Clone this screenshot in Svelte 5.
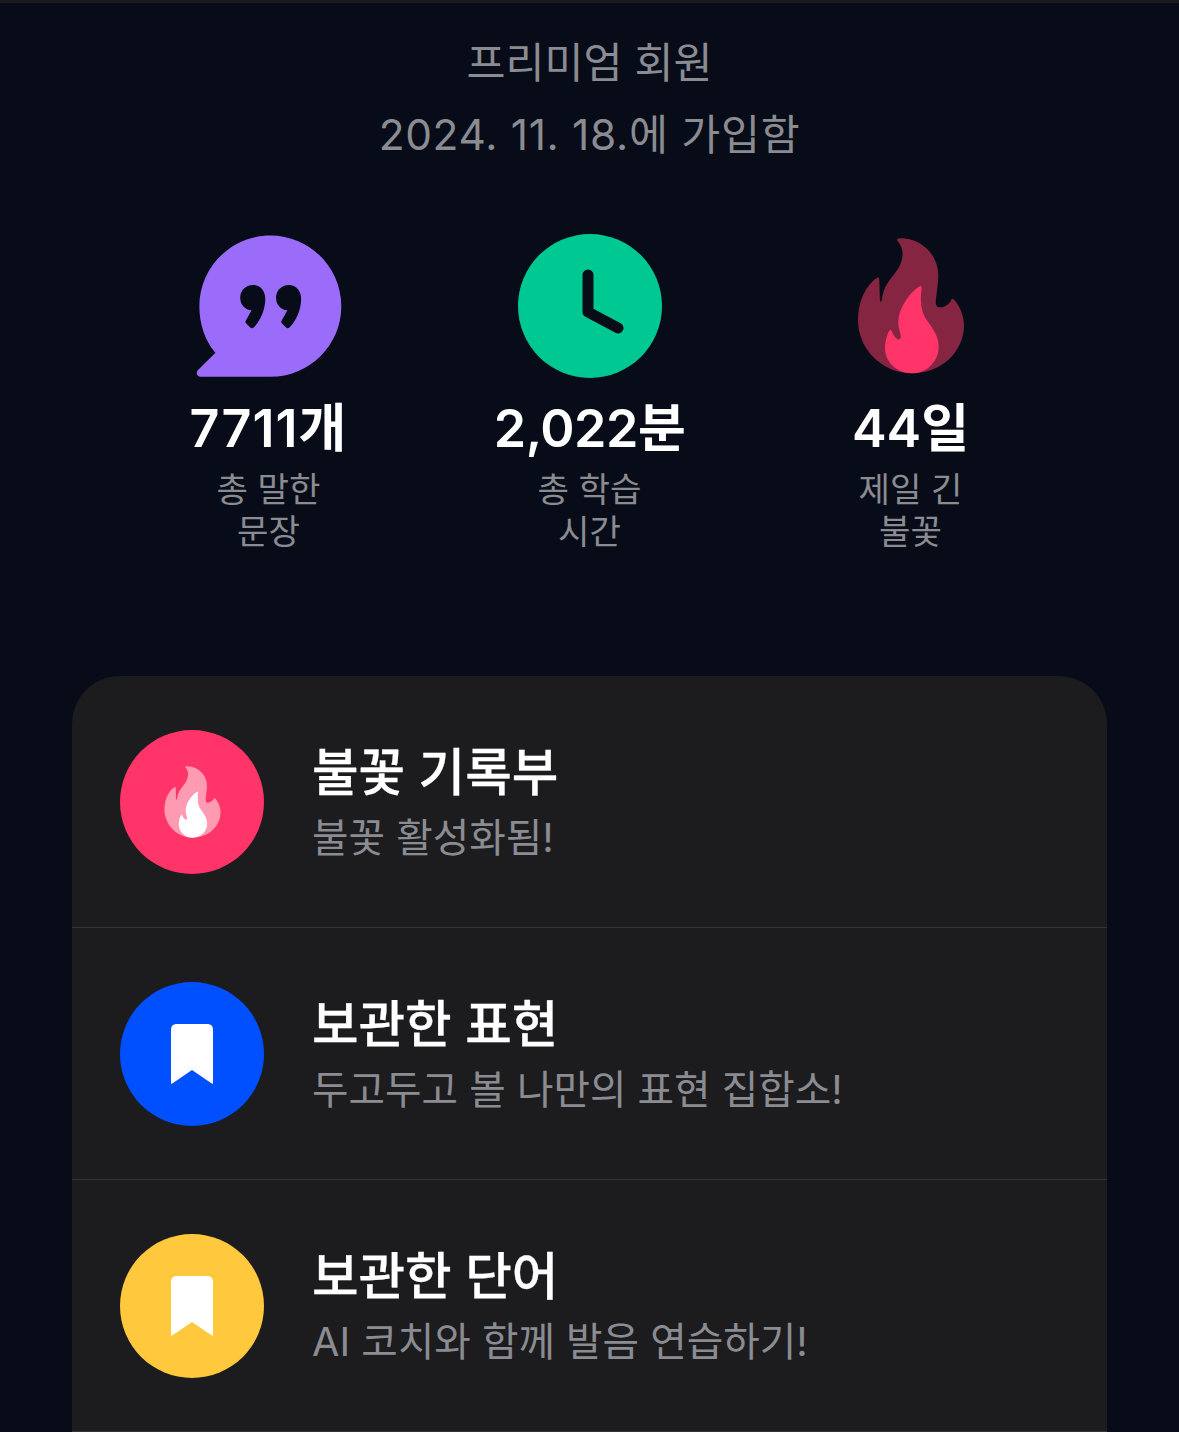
<script>
  const stats = [
    { kind: 'quote', value: '7711개', track: 1, label: ['총 말한', '문장'] },
    { kind: 'clock', value: '2,022분', track: -0.5, label: ['총 학습', '시간'] },
    { kind: 'fire', value: '44일', track: 0, label: ['제일 긴', '불꽃'] }
  ];
  const rows = [
    { kind: 'fire', color: '#ff3468', title: '불꽃 기록부', sub: '불꽃 활성화됨!' },
    { kind: 'mark', color: '#0050ff', title: '보관한 표현', sub: '두고두고 볼 나만의 표현 집합소!' },
    { kind: 'mark', color: '#ffc83d', title: '보관한 단어', sub: 'AI 코치와 함께 발음 연습하기!' }
  ];
  const outer = 'M204 56C200 58 200 62 205 66C222 85 222 115 205 145C190 170 165 190 158 225C157 235 155 245 151 247C148 230 150 195 147 175C146 172 143 172 140 174C110 195 84 240 84 300C84 390 160 460 245 460C335 460 402 395 402 315C402 285 385 250 370 237C367 235 365 236 364 240C360 250 345 262 330 262C318 262 316 250 318 235C325 180 332 150 310 110C285 70 245 55 215 55C210 55 206 55 204 56Z';
  const inner = 'M271 198C262 202 240 220 225 245C208 272 200 300 208 330C212 345 216 355 208 358C198 360 190 345 185 333C183 328 180 328 178 332C168 350 165 370 165 385C165 425 200 460 245 460C290 460 326 425 326 380C326 345 305 322 290 300C272 275 270 240 275 205C276 200 274 197 271 198Z';
</script>

{#snippet flame(a, b, cls)}
  <svg class={cls} viewBox="84 54 318 408"><path d={outer} fill={a} /><path d={inner} fill={b} /></svg>
{/snippet}

<main>
  <header>
    <p>프리미엄 회원</p>
    <p>2024. 11. 18.에 가입함</p>
  </header>

  <section class="stats">
    {#each stats as s}
      <div class="stat">
        <div class="icon">
          {#if s.kind === 'quote'}
            <svg class="quote" viewBox="78 44 436 426">
              <path d="M300 45C417 45 512 140 512 256C512 372 417 467 300 467H92C81 467 76 455 84 447L136 395C104 358 88 308 88 256C88 140 183 45 300 45Z" fill="#9a6cf9" />
              <path d="M248 193C270 193 285 210 285 235C285 265 270 300 250 320C247 323 243 323 240 320L228 308C225 305 225 302 227 299L244 268C225 268 210 252 210 231C210 210 226 193 248 193ZM355 193C377 193 392 210 392 235C392 265 377 300 357 320C354 323 350 323 347 320L335 308C332 305 332 302 334 299L351 268C332 268 317 252 317 231C317 210 333 193 355 193Z" fill="#070c18" />
            </svg>
          {:else if s.kind === 'clock'}
            <svg class="clock" viewBox="0 0 144 144">
              <circle cx="72" cy="72" r="72" fill="#00c892" />
              <path d="M70 41V78L100 94" fill="none" stroke="#070c18" stroke-width="11" stroke-linecap="round" stroke-linejoin="round" />
            </svg>
          {:else}
            {@render flame('#852542', '#ff3468', 'bigflame')}
          {/if}
        </div>
        <strong style="letter-spacing:{s.track}px">{s.value}</strong>
        <span>{s.label[0]}<br />{s.label[1]}</span>
      </div>
    {/each}
  </section>

  <section class="card">
    {#each rows as r}
      <div class="row">
        <div class="disc" style="background:{r.color}">
          {#if r.kind === 'fire'}
            {@render flame('#ff9ab3', '#ffffff', 'smallflame')}
          {:else}
            <svg class="mark" viewBox="0 0 42 60">
              <path d="M0 6C0 2 2 0 6 0H36C40 0 42 2 42 6V59C42 60 41 60 40 59L21 46L2 59C1 60 0 60 0 59Z" fill="#fff" />
            </svg>
          {/if}
        </div>
        <div class="text">
          <h2>{r.title}</h2>
          <p>{r.sub}</p>
        </div>
      </div>
    {/each}
  </section>
</main>

<style>
  :global(body) {
    margin: 0;
    background: #070c18;
  }
  main {
    height: 1432px;
    overflow: hidden;
    border-top: 3px solid #1c1c1e;
    box-sizing: border-box;
    font-family: Inter, "Noto Sans CJK KR", sans-serif;
    color: #fff;
  }
  header {
    padding-top: 24px;
    text-align: center;
    color: #8b8b92;
    font-size: 42.4px;
    font-weight: 400;
    line-height: 72px;
  }
  header p {
    margin: 0;
  }
  header p + p {
    letter-spacing: 0.7px;
  }
  .stats {
    display: grid;
    grid-template-columns: repeat(3, 321px);
    justify-content: center;
    margin-top: 63px;
  }
  .stat {
    display: flex;
    flex-direction: column;
    align-items: center;
    text-align: center;
  }
  .icon {
    height: 144px;
    display: flex;
    align-items: center;
    justify-content: center;
  }
  .quote {
    width: 146px;
    height: 143px;
  }
  .clock {
    width: 144px;
    height: 144px;
  }
  .bigflame {
    width: 106px;
    height: 136px;
  }
  strong {
    margin-top: 17px;
    font-size: 52px;
    font-weight: 600;
    line-height: 68px;
    white-space: nowrap;
  }
  .stat span {
    margin-top: 6px;
    font-size: 34.2px;
    line-height: 42px;
    color: #8b8b92;
  }
  .card {
    margin: 123px 72px 0;
    background: #1c1c1e;
    border-radius: 48px 48px 0 0;
  }
  .row {
    box-sizing: border-box;
    height: 252px;
    padding: 0 48px;
    display: flex;
    align-items: center;
    gap: 48px;
    border-bottom: 1px solid #333336;
  }
  .disc {
    width: 144px;
    height: 144px;
    flex: none;
    border-radius: 50%;
    display: flex;
    align-items: center;
    justify-content: center;
  }
  .smallflame {
    width: 57px;
    height: 72px;
  }
  .mark {
    width: 42px;
    height: 60px;
  }
  h2 {
    margin: 0;
    font-size: 50.6px;
    font-weight: 500;
    line-height: 64px;
    -webkit-text-stroke: 0.3px #fff;
  }
  .text p {
    margin: 8px 0 0;
    font-size: 39.7px;
    font-weight: 400;
    line-height: 50px;
    color: #8b8b92;
  }
</style>
